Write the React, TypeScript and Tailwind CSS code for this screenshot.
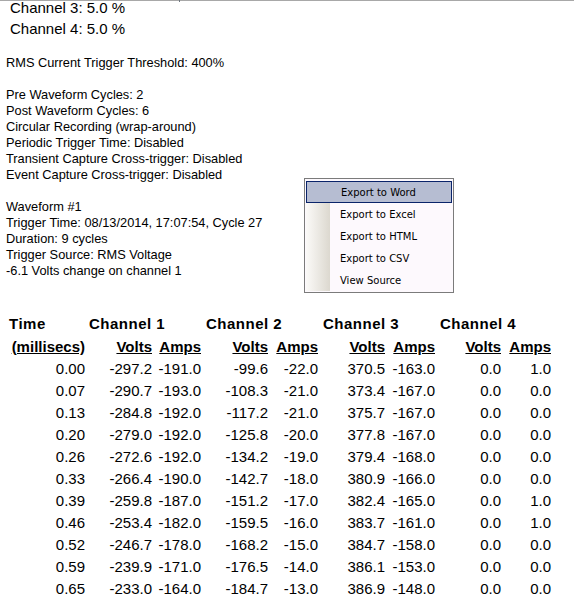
const rows: [string, string, string, string, string, string, string, string, string][] = [
  ["0.00", "-297.2", "-191.0", "-99.6", "-22.0", "370.5", "-163.0", "0.0", "1.0"],
  ["0.07", "-290.7", "-193.0", "-108.3", "-21.0", "373.4", "-167.0", "0.0", "0.0"],
  ["0.13", "-284.8", "-192.0", "-117.2", "-21.0", "375.7", "-167.0", "0.0", "0.0"],
  ["0.20", "-279.0", "-192.0", "-125.8", "-20.0", "377.8", "-167.0", "0.0", "0.0"],
  ["0.26", "-272.6", "-192.0", "-134.2", "-19.0", "379.4", "-168.0", "0.0", "0.0"],
  ["0.33", "-266.4", "-190.0", "-142.7", "-18.0", "380.9", "-166.0", "0.0", "0.0"],
  ["0.39", "-259.8", "-187.0", "-151.2", "-17.0", "382.4", "-165.0", "0.0", "1.0"],
  ["0.46", "-253.4", "-182.0", "-159.5", "-16.0", "383.7", "-161.0", "0.0", "1.0"],
  ["0.52", "-246.7", "-178.0", "-168.2", "-15.0", "384.7", "-158.0", "0.0", "0.0"],
  ["0.59", "-239.9", "-171.0", "-176.5", "-14.0", "386.1", "-153.0", "0.0", "0.0"],
  ["0.65", "-233.0", "-164.0", "-184.7", "-13.0", "386.9", "-148.0", "0.0", "0.0"],
];

const cols = "grid grid-cols-[87px_67px_50px_66px_51px_66px_51px_65px_51px]";

const menuItems = ["Export to Word", "Export to Excel", "Export to HTML", "Export to CSV", "View Source"];

function ContextMenu() {
  return (
    <div className="absolute left-[304px] top-[178px] w-[150px] border border-[#7b7b7b] bg-[#fdf9fd] px-[1px] pt-[2px] pb-[1px] font-['DejaVu_Sans',sans-serif] text-[10px] text-black">
      {menuItems.map((item, i) =>
        i === 0 ? (
          <div key={item} className="flex h-[22px] items-center border border-[#0a246a] bg-[#b6bdd2] pl-[34px]">
            {item}
          </div>
        ) : (
          <div key={item} className="flex h-[22px] items-center">
            <div className="h-full w-[24px] bg-gradient-to-r from-[#fbfaf8] to-[#dcd8cf]" />
            <span className="pl-[10px]">{item}</span>
          </div>
        )
      )}
    </div>
  );
}

export default function App() {
  return (
    <div className="relative h-[596px] w-[574px] overflow-hidden bg-white font-['Liberation_Sans',Arial,sans-serif] text-black">
      <div className="absolute left-0 top-0 h-[1px] w-full bg-[#a8a8a8]" />
      <div className="absolute left-[179px] top-0 h-[2px] w-[1px] bg-[#707880]" />

      <div className="mt-[-3px] pl-[10px] text-[15px] leading-[21px]">
        <div>Channel 3: 5.0 %</div>
        <div>Channel 4: 5.0 %</div>
      </div>

      <div className="mt-[16px] pl-[6px] text-[12.8px] leading-[16px]">
        <div>RMS Current Trigger Threshold: 400%</div>
        <div className="mt-4">
          <div>Pre Waveform Cycles: 2</div>
          <div>Post Waveform Cycles: 6</div>
          <div>Circular Recording (wrap-around)</div>
          <div>Periodic Trigger Time: Disabled</div>
          <div>Transient Capture Cross-trigger: Disabled</div>
          <div>Event Capture Cross-trigger: Disabled</div>
        </div>
        <div className="mt-4">
          <div>Waveform #1</div>
          <div>Trigger Time: 08/13/2014, 17:07:54, Cycle 27</div>
          <div>Duration: 9 cycles</div>
          <div>Trigger Source: RMS Voltage</div>
          <div>-6.1 Volts change on channel 1</div>
        </div>
      </div>

      <div className="mt-[33px] text-[15px]">
        <div className={`${cols} h-[24px] items-center font-bold tracking-[0.5px]`}>
          <div className="pl-[9px]">Time</div>
          <div className="col-span-2 pl-[2px]">Channel 1</div>
          <div className="col-span-2 pl-[2px]">Channel 2</div>
          <div className="col-span-2 pl-[2px]">Channel 3</div>
          <div className="col-span-2 pl-[2px]">Channel 4</div>
        </div>
        <div className={`${cols} h-[22px] items-center text-right font-bold`}>
          <div className="pr-[2px]"><span className="underline">(millisecs)</span></div>
          {[1, 2, 3, 4].map((n) => (
            <div key={n} className="contents">
              <div className="pr-[2px]"><span className="underline">Volts</span></div>
              <div className="pr-[3px]"><span className="underline">Amps</span></div>
            </div>
          ))}
        </div>
        {rows.map((r) => (
          <div key={r[0]} className={`${cols} h-[22px] items-center text-right`}>
            {r.map((v, j) => (
              <div key={j} className={j % 2 === 0 && j > 0 ? "pr-[3px]" : "pr-[2px]"}>
                {v}
              </div>
            ))}
          </div>
        ))}
      </div>

      <ContextMenu />
    </div>
  );
}
